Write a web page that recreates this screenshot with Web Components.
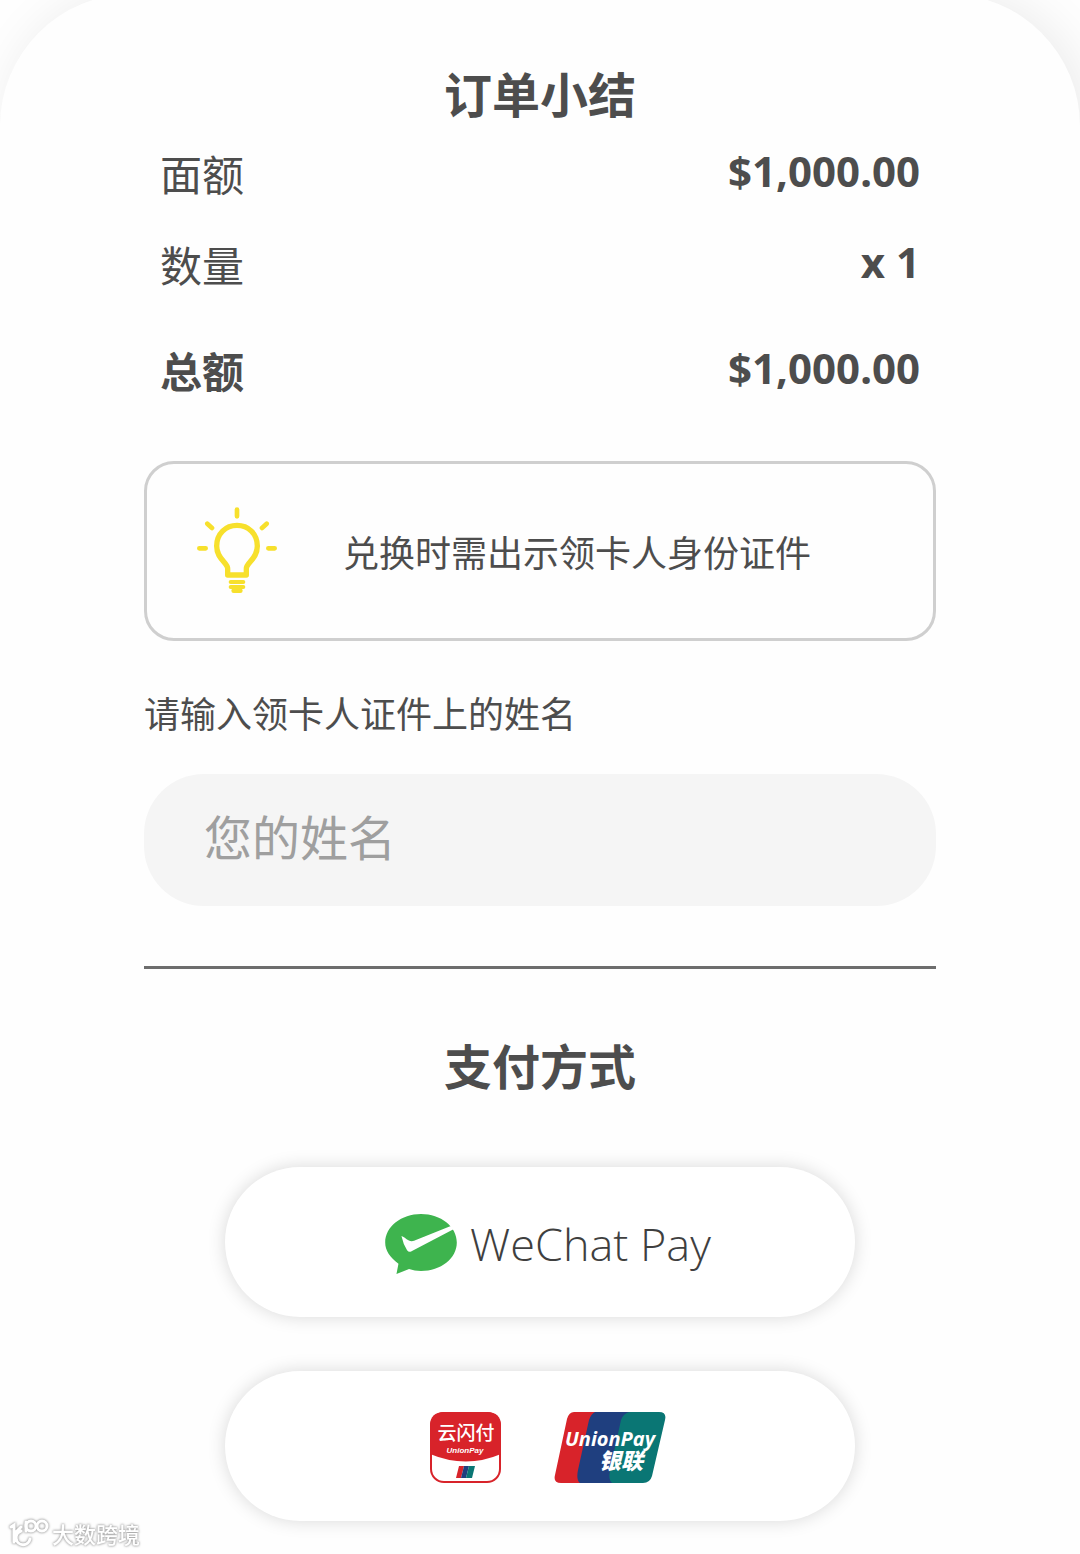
<!DOCTYPE html>
<html lang="zh-CN">
<head>
<meta charset="utf-8">
<meta name="viewport" content="width=device-width, initial-scale=1">
<title>订单小结</title>
<style>
  body {
    margin: 0;
    background: #fefefe;
    color: #4d4d4d;
    font-family: "Noto Sans", "Noto Sans CJK SC", sans-serif;
    overflow-x: hidden;
  }
</style>
</head>
<body>
<checkout-sheet>
  <section-title>订单小结</section-title>
  <order-summary>
    <summary-row label="面额">$1,000.00</summary-row>
    <summary-row label="数量">x 1</summary-row>
    <summary-row label="总额" total>$1,000.00</summary-row>
  </order-summary>
  <notice-box>兑换时需出示领卡人身份证件</notice-box>
  <name-field placeholder="您的姓名">请输入领卡人证件上的姓名</name-field>
  <section-title divided>支付方式</section-title>
  <payment-methods>
    <payment-button label="WeChat Pay"><wechat-logo></wechat-logo></payment-button>
    <payment-button label="云闪付 UnionPay 银联"><quickpass-logo></quickpass-logo><unionpay-logo></unionpay-logo></payment-button>
  </payment-methods>
</checkout-sheet>
<site-mark>大数跨境</site-mark>

<script>
// Small base: every element renders its own markup once
class BaseElement extends HTMLElement {
  constructor() {
    super();
    this.attachShadow({ mode: 'open' });
  }

  connectedCallback() {
    this.shadowRoot.innerHTML = this.render();
  }
}

class CheckoutSheet extends BaseElement {
  render() {
    return `
      <style>
        :host {
          display: block;
          box-sizing: border-box;
          min-height: 100vh;
          /* the sheet's top edge is tucked just above the viewport */
          margin-top: -6px;
          padding: 66px 144px 32px;
          border-radius: 132px 132px 0 0;
          background: #fefefe;
          box-shadow: 8px 0 50px rgba(0, 0, 0, 0.08);
        }
        main { display: flex; flex-direction: column; }
      </style>
      <main><slot></slot></main>
    `;
  }
}

class SectionTitle extends BaseElement {
  render() {
    return `
      <style>
        :host { display: block; }
        :host([divided]) {
          margin-top: 60px;
          padding-top: 63px;
          border-top: 3px solid #6d6d6d;
        }
        h2 {
          margin: 0;
          font: bold 48px/64px "Noto Sans CJK SC", sans-serif;
          text-align: center;
        }
      </style>
      <h2><slot></slot></h2>
    `;
  }
}

class OrderSummary extends BaseElement {
  render() {
    return `
      <style>
        :host {
          display: flex;
          flex-direction: column;
          gap: 31px;
          margin-top: 19px;
          padding: 0 16px;
        }
      </style>
      <slot></slot>
    `;
  }
}

class SummaryRow extends BaseElement {
  render() {
    return `
      <style>
        :host {
          display: flex;
          align-items: flex-start;
          justify-content: space-between;
          font-size: 42px;
        }
        :host([total]) { margin-top: 15px; }
        .label {
          font-family: "Noto Sans CJK SC", sans-serif;
          line-height: 60px;
        }
        :host([total]) .label { font-weight: bold; }
        .value { font-weight: bold; line-height: 56px; }
      </style>
      <span class="label">${this.getAttribute('label')}</span>
      <span class="value"><slot></slot></span>
    `;
  }
}

class NoticeBox extends BaseElement {
  render() {
    return `
      <style>
        :host {
          display: flex;
          align-items: center;
          gap: 66px;
          margin-top: 61px;
          padding: 43px 50px;
          border: 3px solid #cfcfcf;
          border-radius: 30px;
        }
        svg { flex: none; width: 80px; height: 88px; }
        p {
          margin: 0;
          font: 36px/48px "Noto Sans CJK SC", sans-serif;
        }
      </style>
      <svg viewBox="51 48 240 264" fill="none" stroke="#f7e02c" stroke-linecap="round" aria-hidden="true">
        <path d="M171 56v20M82 98l14 13M260 98l-14 13M58 172h19M265 172h19" stroke-width="14"/>
        <path d="M143 252V233C143 214 110 205 110 165C110 128 137 103 171 103S232 128 232 165C232 205 199 214 199 233V252Z" stroke-width="16" stroke-linejoin="round"/>
        <path d="M152 273h38M152 288h38" stroke-width="12"/>
        <path d="M161 299h20" stroke-width="14"/>
      </svg>
      <p><slot></slot></p>
    `;
  }
}

class NameField extends BaseElement {
  render() {
    return `
      <style>
        :host { display: flex; flex-direction: column; margin-top: 47px; }
        label { font: 36px/48px "Noto Sans CJK SC", sans-serif; }
        input {
          box-sizing: border-box;
          width: 100%;
          height: 132px;
          margin: 38px 0 0;
          padding: 0 60px 6px;
          border: 0;
          border-radius: 60px;
          background: #f5f5f5;
          color: inherit;
          font-family: inherit;
          font-size: 48px;
        }
        input::placeholder { color: #9f9f9f; opacity: 1; }
      </style>
      <label for="name"><slot></slot></label>
      <input id="name" type="text" placeholder="${this.getAttribute('placeholder')}">
    `;
  }
}

class PaymentMethods extends BaseElement {
  render() {
    return `
      <style>
        :host {
          display: flex;
          flex-direction: column;
          gap: 54px;
          margin-top: 71px;
          padding: 0 81px;
        }
      </style>
      <slot></slot>
    `;
  }
}

class PaymentButton extends BaseElement {
  render() {
    return `
      <style>
        :host { display: block; }
        button {
          display: flex;
          align-items: center;
          justify-content: center;
          gap: 53px;
          width: 100%;
          height: 150px;
          padding: 3px 0 0 16px;
          border: 0;
          border-radius: 75px;
          background: #fff;
          box-shadow: 0 0 18px rgba(0, 0, 0, 0.15);
          color: inherit;
          font: inherit;
          cursor: pointer;
        }
      </style>
      <button type="button" aria-label="${this.getAttribute('label')}"><slot></slot></button>
    `;
  }
}

class WechatLogo extends BaseElement {
  render() {
    return `
      <style>
        :host { display: flex; align-items: center; gap: 13px; }
        svg { width: 72px; height: 60px; }
        span { color: #3f3f3f; font: 300 45px/62px "Open Sans", sans-serif; }
      </style>
      <svg viewBox="50 57 216 181" aria-hidden="true">
        <path fill="#3eb44e" d="M158 57C99 57 50 95 50 143C50 167 64 188 90 207L84 238L122 223C133 227 145 229 158 229C218 229 266 191 266 143C266 95 218 57 158 57Z"/>
        <path fill="#fff" d="M99 123C105 124 113 132 120 136Q128 141 137 138L246 94Q254 91 260 97L256 103L128 170Q121 173 116 166Q104 147 99 123Z"/>
      </svg>
      <span>WeChat Pay</span>
    `;
  }
}

class QuickpassLogo extends BaseElement {
  render() {
    return `
      <style>
        :host { display: block; }
        svg { display: block; width: 71px; height: 71px; }
        text { fill: #fff; text-anchor: middle; }
        .cn { font: 500 19px "Noto Sans CJK SC", sans-serif; }
        .en { font: italic bold 8px "Liberation Sans", sans-serif; }
      </style>
      <svg viewBox="0 0 71 71">
        <rect x="1" y="1" width="69" height="69" rx="13" fill="#fff" stroke="#d8232a" stroke-width="2"/>
        <path fill="#d8232a" d="M0 42V14Q0 0 14 0H57Q71 0 71 14V42Q36 57 0 42Z"/>
        <text class="cn" x="36" y="28">云闪付</text>
        <text class="en" x="35" y="41">UnionPay</text>
        <path fill="#d8232a" d="M29 54H34L31 66H26Z"/>
        <path fill="#1f3f7f" d="M34 54H39L36 66H31Z"/>
        <path fill="#0a7674" d="M39 54H45L42 66H36Z"/>
      </svg>
    `;
  }
}

class UnionpayLogo extends BaseElement {
  render() {
    return `
      <style>
        :host { display: block; }
        svg { display: block; width: 112px; height: 71px; }
        text { fill: #fff; }
        .en { font: italic bold 20px "Open Sans", sans-serif; }
        .cn { font: italic 900 22px "Noto Sans CJK SC", sans-serif; }
      </style>
      <svg viewBox="0 0 112 71">
        <path fill="#0a7674" d="M40 0H105Q113 0 111 8L98 64Q96 71 89 71H28Z"/>
        <path fill="#1f3f7f" d="M30 0H75Q69 2 67 8L56 58Q54 68 58 71H20Z"/>
        <path fill="#d8232a" d="M20 0H41Q37 2 35 8L24 58Q22 68 26 71H7Q-1 71 1 63L13 7Q15 0 20 0Z"/>
        <text class="en" x="11" y="34">UnionPay</text>
        <text class="cn" x="45" y="57">银联</text>
      </svg>
    `;
  }
}

// Source mark laid over the bottom left corner of the page
class SiteMark extends BaseElement {
  render() {
    return `
      <style>
        :host {
          position: absolute;
          left: 8px;
          top: 1517px;
          display: flex;
          align-items: center;
          gap: 3px;
          color: #fff;
          filter: drop-shadow(0 0 1px #999) drop-shadow(0 0 1px #ccc);
        }
        svg { width: 41px; height: 32px; }
        span { font: 500 22px/32px "Noto Sans CJK SC", sans-serif; }
      </style>
      <svg viewBox="0 0 41 32" fill="none" stroke="#fff" stroke-width="3" stroke-linecap="round" aria-hidden="true">
        <path d="M3 10L6 8V25M13 10L6 17M13 14A7 7 0 1 0 22 22"/>
        <path d="M18 5V14"/>
        <circle cx="23" cy="9" r="5"/>
        <circle cx="34" cy="9" r="5"/>
      </svg>
      <span><slot></slot></span>
    `;
  }
}

customElements.define('checkout-sheet', CheckoutSheet);
customElements.define('section-title', SectionTitle);
customElements.define('order-summary', OrderSummary);
customElements.define('summary-row', SummaryRow);
customElements.define('notice-box', NoticeBox);
customElements.define('name-field', NameField);
customElements.define('payment-methods', PaymentMethods);
customElements.define('payment-button', PaymentButton);
customElements.define('wechat-logo', WechatLogo);
customElements.define('quickpass-logo', QuickpassLogo);
customElements.define('unionpay-logo', UnionpayLogo);
customElements.define('site-mark', SiteMark);
</script>
</body>
</html>
